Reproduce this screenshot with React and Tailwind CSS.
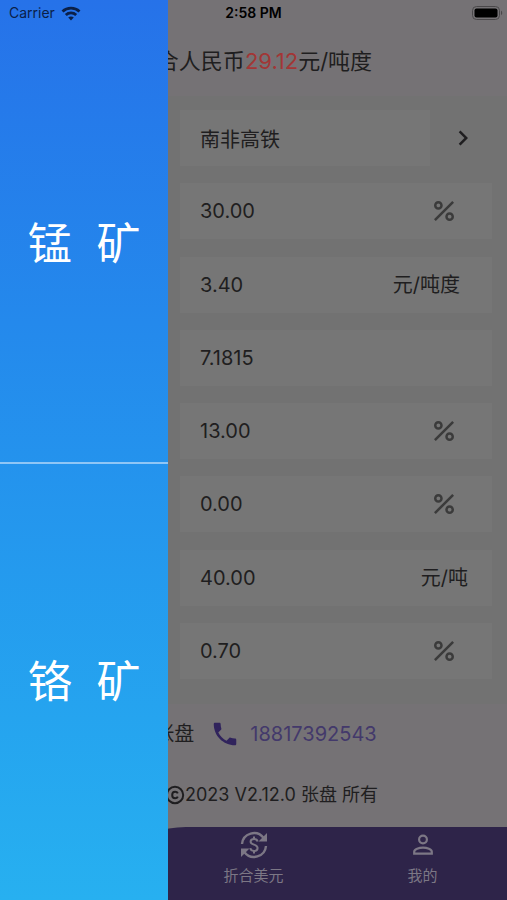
import React from "react";
import {
  MdChevronRight,
  MdCurrencyYuan,
  MdPercent,
  MdPersonOutline,
  MdPhone,
} from "react-icons/md";

const FIELDS = [
  { id: "grade", label: "品位", value: "30.00", unit: "%" },
  { id: "price", label: "单价", value: "3.40", unit: "元/吨度" },
  { id: "rate", label: "汇率", value: "7.1815", unit: "" },
  { id: "vat", label: "增值税", value: "13.00", unit: "%" },
  { id: "duty", label: "关税", value: "0.00", unit: "%" },
  { id: "port", label: "港杂费", value: "40.00", unit: "元/吨" },
  { id: "loss", label: "损耗", value: "0.70", unit: "%" },
];

function StatusBar() {
  return (
    <div className="relative z-20 grid h-[26px] grid-cols-3 items-center text-sm leading-5 text-black">
      <div className="flex items-center gap-[6px] pl-[9px] text-[#0b2048]">
        <span>Carrier</span>
        <svg width="20" height="15" viewBox="0 0 20 15" fill="none" stroke="currentColor" strokeWidth="2.8" aria-hidden="true">
          <path d="M1.5 5.4C6.2 0.9 13.8 0.9 18.5 5.4" />
          <path d="M4.8 9C7.8 6.2 12.2 6.2 15.2 9" />
          <path d="M10 14.4L7.2 11.6C8.8 10.1 11.2 10.1 12.8 11.6Z" fill="currentColor" stroke="none" />
        </svg>
      </div>
      <div className="text-center font-semibold">2:58 PM</div>
      <svg className="mr-1 justify-self-end" width="31" height="14" viewBox="0 0 31 14" aria-hidden="true">
        <rect x="0.5" y="0.5" width="27" height="13" rx="4" fill="none" stroke="#4a484a" />
        <rect x="2.5" y="2.5" width="23" height="9" rx="2" fill="#000" />
        <path d="M29 4.8C30.6 5.4 30.6 8.6 29 9.2Z" fill="#4a484a" />
      </svg>
    </div>
  );
}

function CopyrightIcon() {
  return (
    <svg width="20" height="20" viewBox="0 0 20 20" fill="none" stroke="currentColor" strokeWidth="2" aria-hidden="true">
      <circle cx="10" cy="10" r="8.2" />
      <path d="M12.8 8.4C12.3 7.2 11.3 6.7 10.1 6.7C8.2 6.7 7.2 8.1 7.2 10C7.2 11.9 8.2 13.3 10.1 13.3C11.3 13.3 12.3 12.8 12.8 11.6" />
    </svg>
  );
}

function ExchangeIcon() {
  return (
    <svg width="28" height="28" viewBox="0 0 28 28" fill="none" stroke="currentColor" strokeWidth="2.4" aria-hidden="true">
      <path d="M2 13A12 12 0 0 1 23.5 6.8" />
      <path d="M27 2V10.5H18.5Z" fill="currentColor" stroke="none" />
      <path d="M26 15A12 12 0 0 1 4.5 21.2" />
      <path d="M1 26V17.5H9.5Z" fill="currentColor" stroke="none" />
      <path d="M17.6 10.6C17.2 8.9 15.9 8.1 14 8.1C11.9 8.1 10.6 9.2 10.6 10.8C10.6 14.4 17.6 12.8 17.6 17C17.6 18.8 16.2 19.9 14 19.9C12 19.9 10.6 19 10.3 17.2M14 5.5V8.2M14 19.8V22.5" strokeWidth="2" />
    </svg>
  );
}

function PersonIcon() {
  return (
    <svg width="24" height="24" viewBox="0 0 24 24" fill="none" stroke="currentColor" strokeWidth="2.2" aria-hidden="true">
      <circle cx="12" cy="6.5" r="3.9" />
      <path d="M3.2 20.6V18.8C3.2 16.2 8 14.6 12 14.6S20.8 16.2 20.8 18.8V20.6Z" />
    </svg>
  );
}

function Unit({ unit }) {
  if (!unit) return null;
  if (unit === "%") {
    return (
      <span className="mr-6 flex w-12 justify-center text-[#3b3b3b]">
        <MdPercent size={30} />
      </span>
    );
  }
  return (
    <span className={unit.length > 3 ? "mr-8 whitespace-nowrap" : "mr-6 whitespace-nowrap"}>{unit}</span>
  );
}

function Field({ field }) {
  return (
    <label className="flex h-14 items-center bg-[#767676]">
      <input
        id={field.id}
        aria-label={field.label}
        defaultValue={field.value}
        inputMode="decimal"
        className="h-full w-full min-w-0 flex-1 bg-transparent pl-5 outline-none"
      />
      <Unit unit={field.unit} />
    </label>
  );
}

function Drawer() {
  return (
    <aside className="absolute inset-y-0 left-0 z-10 flex w-[33.2%] flex-col bg-gradient-to-b from-[#2672e9] to-[#27b0f0] pt-[26px] text-[44px] text-white">
      <button type="button" className="flex-1 whitespace-pre border-b-2 border-[#8fc6f6]">{"锰  矿"}</button>
      <button type="button" className="flex-1 whitespace-pre">{"铬  矿"}</button>
    </aside>
  );
}

function NavItem({ icon, label }) {
  return (
    <button type="button" className="flex flex-1 flex-col items-center gap-1 pt-[3px] text-[#7c7785]">
      <span className="flex h-[30px] items-center">{icon}</span>
      <span className="text-[15px] leading-6">{label}</span>
    </button>
  );
}

export default function App() {
  return (
    <div className="relative flex min-h-screen flex-col overflow-hidden bg-[#757275] font-['Inter','Noto_Sans_CJK_SC',sans-serif] text-[#1f1e20]">
      <StatusBar />
      <Drawer />

      <h1 className="flex h-[70px] items-center justify-center text-[22px]">
        <span>
          折合人民币<span className="text-[#a23636]">29.12</span>元/吨度
        </span>
      </h1>

      <form className="flex flex-1 flex-col justify-between bg-[#727272] pb-[25px] pl-[180px] pr-[15px] pt-[14px] text-xl">
        <div className="flex items-center">
          <input
            id="kind"
            aria-label="品种"
            readOnly
            defaultValue="南非高铁"
            className="h-14 w-full min-w-0 flex-1 bg-[#767676] pl-5 outline-none"
          />
          <button type="button" aria-label="选择品种" className="flex w-[62px] justify-center pl-1">
            <MdChevronRight size={30} />
          </button>
        </div>
        {FIELDS.map((field) => (
          <Field key={field.id} field={field} />
        ))}
      </form>

      <footer className="flex h-[123px] flex-col items-center">
        <div className="flex h-[60px] items-center text-xl">
          <MdPersonOutline size={24} />
          <span>张盘</span>
          <a href="tel:18817392543" className="flex items-center gap-[10px] pl-4 text-[#43396b]">
            <MdPhone size={30} className="text-[#30235c]" />
            18817392543
          </a>
        </div>
        <p className="flex h-[62px] items-center whitespace-nowrap text-lg">
          版权
          <CopyrightIcon />
          2023 V2.12.0 张盘 所有
        </p>
      </footer>

      <nav className="relative flex h-[73px] bg-[#2e2449]">
        <svg className="absolute left-[30%] top-0" width="34" height="6" viewBox="0 0 34 6" aria-hidden="true">
          <path d="M0 0H34C22 0 12 2 0 6Z" fill="#757275" />
        </svg>
        <NavItem icon={<MdCurrencyYuan size={28} />} label="折合人民币" />
        <NavItem icon={<ExchangeIcon />} label="折合美元" />
        <NavItem icon={<PersonIcon />} label="我的" />
      </nav>
    </div>
  );
}
